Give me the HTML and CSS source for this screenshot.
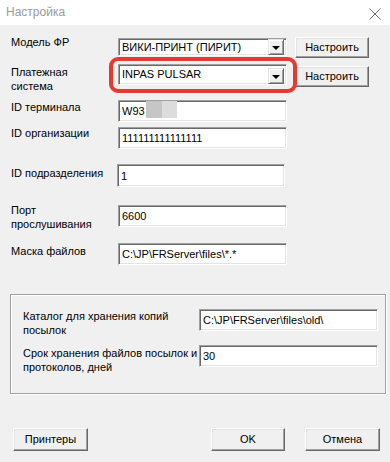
FILE: index.html
```html
<!DOCTYPE html>
<html lang="ru">
<head>
<meta charset="utf-8">
<title>Настройка</title>
<link rel="stylesheet" href="styles.css">
</head>
<body>
<div class="titlebar">
  <span class="title">Настройка</span>
  <svg class="close" width="12" height="12" viewBox="0 0 12 12"><path d="M0.5 0.5 L11.5 11.5 M11.5 0.5 L0.5 11.5" stroke="#6b6b6b" stroke-width="1" fill="none"/></svg>
</div>
<div class="content">
  <div class="row r1">
    <div class="label l1">Модель ФР</div>
    <div class="combo c1"><span class="ctext">ВИКИ-ПРИНТ (ПИРИТ)</span><span class="dd"><i class="tri"></i></span></div>
    <div class="btn cfg b1">Настроить</div>
  </div>
  <div class="row r2">
    <div class="label l2">Платежная<br>система</div>
    <div class="combo c2"><span class="ctext">INPAS PULSAR</span><span class="dd"><i class="tri"></i></span></div>
    <div class="btn cfg b2">Настроить</div>
    <div class="ring"></div>
  </div>
  <div class="row r3">
    <div class="label">ID терминала</div>
    <div class="edit">W93<span class="blur b-a"></span><span class="blur b-b"></span></div>
  </div>
  <div class="row r4">
    <div class="label l4">ID организации</div>
    <div class="edit">111111111111111</div>
  </div>
  <div class="row r5">
    <div class="label l5">ID подразделения</div>
    <div class="edit e5">1</div>
  </div>
  <div class="row r6">
    <div class="label">Порт<br>прослушивания</div>
    <div class="edit e6">6600</div>
  </div>
  <div class="row r7">
    <div class="label l7">Маска файлов</div>
    <div class="edit">C:\JP\FRServer\files\*.*</div>
  </div>
  <div class="group">
    <div class="grow ga">
      <div class="glabel">Каталог для хранения копий<br>посылок</div>
      <div class="edit gedit">C:\JP\FRServer\files\old\</div>
    </div>
    <div class="grow gb">
      <div class="glabel gl2">Срок хранения файлов посылок и<br>протоколов, дней</div>
      <div class="edit gedit">30</div>
    </div>
  </div>
  <div class="buttons">
    <div class="btn bb printers">Принтеры</div>
    <div class="btn bb ok">OK</div>
    <div class="btn bb cancel">Отмена</div>
  </div>
</div>
</body>
</html>
```

FILE: styles.css
```css
* { box-sizing: border-box; }
html, body { margin: 0; padding: 0; }
body {
  width: 390px;
  height: 462px;
  background: #f0f0f0;
  font-family: "Liberation Sans", Arial, sans-serif;
  font-size: 11px;
  color: #000;
  overflow: hidden;
  position: relative;
}
.titlebar {
  height: 25px;
  background: #fff;
  display: flex;
  align-items: flex-start;
  justify-content: space-between;
  padding: 5px 9px 0 6px;
}
.title {
  font-size: 12px;
  line-height: 14px;
  color: #9a9a9a;
}
.close { margin-top: 3px; }

.content { padding-top: 12px; }

.row {
  display: flex;
  align-items: flex-start;
  padding-left: 11px;
  position: relative;
}
.label {
  width: 107px;
  line-height: 14px;
  flex: none;
}
.r1 { height: 27px; }
.r2 { height: 36px; }
.r3 { height: 27px; }
.r4 { height: 37px; }
.r5 { height: 39px; }
.r6 { height: 40px; }
.r7 { height: 51px; }
.l1 { margin-top: -2px; }
.l2 { margin-top: 1px; }
.l4 { margin-top: -1px; }
.l5 { margin-top: 2px; width: 106px; }
.l7 { margin-top: 1px; }

/* sunken field */
.edit, .combo {
  background: #fff;
  border-top: 1px solid #a0a0a0;
  border-left: 1px solid #a0a0a0;
  border-bottom: 1px solid #fff;
  border-right: 1px solid #fff;
  box-shadow: inset 1px 1px 0 #696969, inset -1px -1px 0 #e3e3e3;
  line-height: 14px;
  white-space: nowrap;
  flex: none;
}
.edit {
  width: 169px;
  height: 22px;
  padding: 3px 0 0 3px;
  position: relative;
}
.e5 { width: 168px; height: 23px; padding-top: 4px; }
.e6 { margin-top: 2px; }

.combo {
  width: 169px;
  display: flex;
  align-items: flex-start;
  justify-content: space-between;
  padding: 1px 2px 0 3px;
}
.c1 { height: 18px; margin-top: 1px; }
.c2 { height: 21px; padding-top: 2px; }
.ctext { line-height: 14px; }
.dd {
  width: 16px;
  height: 16px;
  margin-top: -1px;
  background: #f0f0f0;
  border-top: 1px solid #e3e3e3;
  border-left: 1px solid #e3e3e3;
  border-bottom: 1px solid #696969;
  border-right: 1px solid #696969;
  box-shadow: inset 1px 1px 0 #fff, inset -1px -1px 0 #a0a0a0;
  display: flex;
  align-items: center;
  justify-content: center;
}
.c2 .dd { margin-top: 1px; }
.tri {
  width: 0;
  height: 0;
  border-left: 4px solid transparent;
  border-right: 4px solid transparent;
  border-top: 4px solid #000;
  margin-top: 1px;
}

/* raised button */
.btn {
  background: #f0f0f0;
  border-top: 1px solid #fff;
  border-left: 1px solid #fff;
  border-bottom: 1px solid #696969;
  border-right: 1px solid #696969;
  box-shadow: inset -1px -1px 0 #a0a0a0, inset 1px 1px 0 #e3e3e3;
  display: flex;
  align-items: center;
  justify-content: center;
  line-height: 14px;
  flex: none;
}
.cfg {
  width: 74px;
  height: 21px;
  margin-left: 8px;
  padding-bottom: 1px;
}
.b2 { margin-top: 2px; }

.ring {
  position: absolute;
  left: 109px;
  top: -7px;
  width: 188px;
  height: 36px;
  border: 4px solid #e53a2f;
  border-radius: 9px;
  pointer-events: none;
}

.blur {
  position: absolute;
  top: 0;
  height: 17px;
}
.b-a { left: 27px; width: 16px; background: #c6c6c6; }
.b-b { left: 43px; width: 15px; background: #dcdcdc; }

.group {
  margin-left: 10px;
  width: 376px;
  height: 100px;
  border: 1px solid #a0a0a0;
  box-shadow: inset 1px 1px 0 #fff, 1px 1px 0 #fff;
  padding: 14px 0 0 12px;
}
.grow {
  display: flex;
  align-items: flex-start;
}
.ga { height: 36px; }
.glabel {
  width: 176px;
  line-height: 14px;
  flex: none;
}
.gl2 { margin-top: 1px; }
.gedit { width: 179px; }

.buttons {
  display: flex;
  margin-top: 34px;
  padding-left: 13px;
}
.bb {
  height: 23px;
  padding-bottom: 1px;
}
.printers { width: 75px; }
.ok { width: 74px; margin-left: 123px; }
.cancel { width: 75px; margin-left: 20px; }
```
